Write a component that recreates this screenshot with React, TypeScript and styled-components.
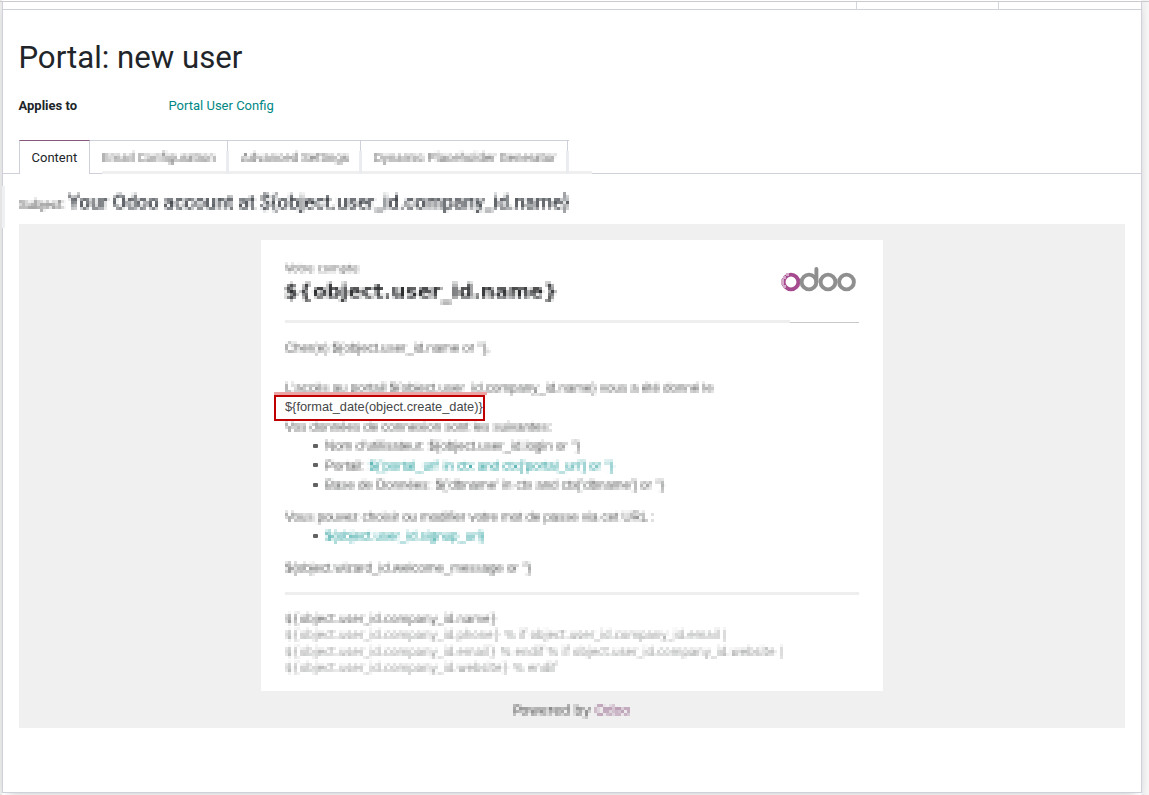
import React from "react";
import styled, { createGlobalStyle } from "styled-components";

const sans = `Roboto, "Liberation Sans", sans-serif`;
const arial = `"Liberation Sans", Arial, sans-serif`;
const verdana = `"DejaVu Sans", Verdana, sans-serif`;

const GlobalStyle = createGlobalStyle`
  * { box-sizing: border-box; }
  body { margin: 0; background: #fff; font-family: ${sans}; color: #212529; overflow: hidden; }
`;

const Page = styled.div`
  height: 795px;
  padding: 1px 7px 2px 2px;
  overflow: hidden;
  background: linear-gradient(90deg, #ebebec 0 2px, #fff 2px 1141px, #ededef 1142px, #f7f7f7 1149px);
`;

const Sheet = styled.main`
  position: relative;
  height: 792px;
  display: flex;
  flex-direction: column;
  background: #fff;
  border: 1px solid #cfd1da;
  border-top: 0;
  box-shadow: 0 4px 10px -7px #888;
`;

const StatusBar = styled.div`
  display: flex;
  justify-content: flex-end;
  height: 9px;
  flex: none;
  margin: 0 -8px 0 -3px;
  padding-right: 8px;
  border-top: 1px solid #c9cbce;
  background: linear-gradient(#cfd1da, #cfd1da) 3px 100% / 1138px 1px no-repeat;
`;

const StatusCell = styled.div<{ $w: number }>`
  width: ${(p) => p.$w}px;
  border-left: 1px solid #d3d6dc;
`;

const Title = styled.h1`
  margin: 27px 0 0 15.4px;
  height: 42px;
  font-size: 31.2px;
  line-height: 42px;
  font-weight: 400;
`;

const Field = styled.div`
  display: flex;
  margin: 17px 0 0 15.5px;
  height: 20px;
  font-size: 13px;
  line-height: 20px;
`;

const Label = styled.label`
  width: 150px;
  font-weight: 700;
`;

const Link = styled.a`
  color: #008784;
`;

const Pixelated = styled.span<{ $ls?: number }>`
  display: inline-block;
  white-space: nowrap;
  letter-spacing: ${(p) => p.$ls ?? 0}px;
  filter: url(#mosaic);
`;

const Tabs = styled.nav`
  display: flex;
  margin-top: 24px;
  height: 34px;
  flex: none;
  padding-left: 16px;
  background:
    linear-gradient(#efeff0, #efeff0) 99px 31px / 490px 3px no-repeat,
    linear-gradient(90deg, #cfd1da 99px, transparent 99px 589px, #cfd1da 589px) 0 33px / 100% 1px no-repeat;
`;

const Tab = styled.div<{ $w: number; $active?: boolean }>`
  width: ${(p) => p.$w}px;
  padding-left: ${(p) => (p.$active ? 11.5 : 12)}px;
  font-size: 13px;
  line-height: 33px;
  white-space: nowrap;
  border-top: 1px solid ${(p) => (p.$active ? "#875a7b" : "#cfd1da")};
  color: ${(p) => (p.$active ? "#212529" : "#666")};
  ${(p) =>
    p.$active
      ? `background: #fff; border-left: 1px solid #cfd1da; border-right: 1px solid #cfd1da;`
      : `background:
          linear-gradient(#cfd1da, #cfd1da) calc(100% - 1px) 0 / 1px 10px no-repeat,
          linear-gradient(#ebecef, #ebecef) 100% 10px / 3px 23px no-repeat;`}
`;

const Subject = styled.div`
  display: flex;
  height: 50px;
  flex: none;
  padding-left: 16px;
  align-items: baseline;
  line-height: 57px;
`;

const SubjectLabel = styled.span`
  width: 49px;
  font-size: 13px;
  color: #4c4c4c;
`;

const SubjectText = styled.span`
  font-size: 19.4px;
  font-weight: 500;
  color: #33383e;
`;

const EdgeFade = styled.i`
  position: absolute;
  left: -1px;
  top: 185px;
  width: 3px;
  height: 42px;
  background: #eff0f2;
`;

const MailArea = styled.section`
  margin: 0 16px;
  height: 504px;
  flex: none;
  padding-top: 16px;
  background: #f0f0f0;
`;

const Card = styled.article`
  width: 622px;
  height: 451px;
  margin: 0 auto 0 242px;
  padding: 22px 24px 0;
  background: #fff;
`;

const CardHeader = styled.header`
  display: flex;
  justify-content: space-between;
  height: 58px;
`;

const Small = styled.div`
  height: 13px;
  font: 11px/13px ${verdana};
  color: #505050;
`;

const Name = styled.div`
  height: 32px;
  margin-left: -0.8px;
  font: bold 20.25px/33px ${verdana};
  color: #2c2e30;
`;

const Logo = styled.svg`
  width: 77px;
  height: 28px;
  margin: 3px 2px 0 0;
`;

const Rule = styled.div<{ $sharp?: boolean }>`
  height: 3px;
  background: ${(p) =>
    p.$sharp
      ? "linear-gradient(#eee,#eee) 0 0 / 505px 3px no-repeat, linear-gradient(#c8c8c8,#c8c8c8) 505px 2px / 69px 1px no-repeat"
      : "#eee"};
`;

const Body = styled.div`
  position: relative;
  padding-top: 15px;
  height: 269px;
  font: 13px/19.5px ${arial};
  color: #505152;
`;

const Line = styled.div<{ $gap?: number }>`
  height: 19.5px;
  margin-top: ${(p) => p.$gap ?? 0}px;
`;

const Teal = styled.span`
  color: #0f9492;
`;

const Item = styled(Line)`
  display: flex;
  padding-left: 28px;
  align-items: center;
  &::before {
    content: "";
    width: 5px;
    height: 4px;
    margin-right: 7px;
    background: #626262;
    border-radius: 1px;
  }
`;

const Highlight = styled.div`
  position: absolute;
  left: -11px;
  top: 72px;
  width: 211px;
  height: 26px;
  padding-left: 9px;
  border: 2px solid #c00000;
  background: #fff;
  color: #454748;
  font: 12.8px/20px ${arial};
  white-space: nowrap;
  &::before {
    content: "";
    position: absolute;
    left: -2px;
    right: -4px;
    top: -5px;
    height: 3px;
    background: #eba5a5;
  }
`;

const Footer = styled.footer`
  padding-top: 16px;
  font: 11.55px/16.4px ${verdana};
  color: #949695;
`;

const FooterLine = styled.div<{ $dark?: boolean }>`
  height: 16.4px;
  color: ${(p) => (p.$dark ? "#5c5c5c" : "inherit")};
`;

const Powered = styled.div`
  margin-left: 494px;
  padding-top: 10px;
  font: 13.4px/20px ${verdana};
  color: #505050;
`;

const Purple = styled.span`
  color: #8c5580;
`;

const tabs = [
  { text: "Email Configuration", w: 139 },
  { text: "Advanced Settings", w: 133 },
  { text: "Dynamic Placeholder Generator", w: 207 },
];

const FilterDefs = styled.svg`
  position: absolute;
`;

/* Averages each 3x3 cell, keeps its centre point and spreads that over the cell. */
function MosaicFilter() {
  return (
    <FilterDefs width="0" height="0" aria-hidden="true">
      <filter id="mosaic" x="0" y="0" width="100%" height="100%" colorInterpolationFilters="sRGB">
        <feConvolveMatrix
          in="SourceGraphic"
          order="3"
          kernelMatrix="1 1 1 1 1 1 1 1 1"
          divisor="9"
          edgeMode="none"
          preserveAlpha="false"
          result="soft"
        />
        <feFlood x="1" y="1" width="1" height="1" floodColor="#000" result="point" />
        <feOffset in="point" dx="0" dy="0" x="0" y="0" width="3" height="3" result="cell" />
        <feTile in="cell" result="grid" />
        <feComposite in="soft" in2="grid" operator="in" />
        <feMorphology operator="dilate" radius="1" />
      </filter>
    </FilterDefs>
  );
}

function OdooLogo() {
  return (
    <Logo viewBox="0 0 77 28" fill="none" strokeWidth="3.9" stroke="#8f8f8f">
      <circle cx="11" cy="17" r="7.4" stroke="#a64a8f" />
      <path d="M3 11h3v3H3zM1 14h3v6H1zM3 20h3v3H3zM6 8h3v3H6z" fill="#d3a8c9" stroke="none" />
      <circle cx="29" cy="17" r="7.4" />
      <path d="M36.4 17V4" strokeLinecap="round" />
      <circle cx="48" cy="17" r="7.4" />
      <circle cx="66.5" cy="17" r="7.4" />
    </Logo>
  );
}

export default function App() {
  return (
    <Page>
      <GlobalStyle />
      <MosaicFilter />
      <Sheet>
        <StatusBar>
          <StatusCell $w={142} />
          <StatusCell $w={143} />
        </StatusBar>
        <Title>Portal: new user</Title>
        <Field>
          <Label>Applies to</Label>
          <Link>Portal User Config</Link>
        </Field>
        <Tabs>
          <Tab $w={71} $active>Content</Tab>
          {tabs.map((t) => (
            <Tab key={t.text} $w={t.w}>
              <Pixelated>{t.text}</Pixelated>
            </Tab>
          ))}
        </Tabs>
        <Subject>
          <SubjectLabel><Pixelated>Subject:</Pixelated></SubjectLabel>
          <SubjectText><Pixelated>{"Your Odoo account at ${object.user_id.company_id.name}"}</Pixelated></SubjectText>
        </Subject>
        <EdgeFade />
        <MailArea>
          <Card>
            <CardHeader>
              <div>
                <Small><Pixelated>Votre compte</Pixelated></Small>
                <Name><Pixelated>{"${object.user_id.name}"}</Pixelated></Name>
              </div>
              <OdooLogo />
            </CardHeader>
            <Rule $sharp />
            <Body>
              <Line><Pixelated $ls={-0.07}>{"Cher(e) ${object.user_id.name or ''},"}</Pixelated></Line>
              <Line $gap={20}><Pixelated>{"L'accès au portail ${object.user_id.company_id.name} vous a été donné le"}</Pixelated></Line>
              <Line $gap={19.5}><Pixelated>Vos données de connexion sont les suivantes:</Pixelated></Line>
              <Item><Pixelated>{"Nom d'utilisateur: ${object.user_id.login or ''}"}</Pixelated></Item>
              <Item><Pixelated>Portail: <Teal>{"${'portal_url' in ctx and ctx['portal_url'] or ''}"}</Teal></Pixelated></Item>
              <Item><Pixelated $ls={-0.02}>{"Base de Données: ${'dbname' in ctx and ctx['dbname'] or ''}"}</Pixelated></Item>
              <Line $gap={12.5}><Pixelated $ls={-0.09}>Vous pouvez choisir ou modifier votre mot de passe via cet URL :</Pixelated></Line>
              <Item $gap={-0.5}><Pixelated $ls={-0.05}><Teal>{"${object.user_id.signup_url}"}</Teal></Pixelated></Item>
              <Line $gap={12.5}><Pixelated $ls={-0.04}>{"${object.wizard_id.welcome_message or ''}"}</Pixelated></Line>
              <Highlight>{"${format_date(object.create_date)}"}</Highlight>
            </Body>
            <Rule />
            <Footer>
              <FooterLine $dark><Pixelated>{"${object.user_id.company_id.name}"}</Pixelated></FooterLine>
              <FooterLine><Pixelated>{"${object.user_id.company_id.phone} % if object.user_id.company_id.email |"}</Pixelated></FooterLine>
              <FooterLine><Pixelated>{"${object.user_id.company_id.email} % endif % if object.user_id.company_id.website |"}</Pixelated></FooterLine>
              <FooterLine><Pixelated>{"${object.user_id.company_id.website} % endif"}</Pixelated></FooterLine>
            </Footer>
          </Card>
          <Powered><Pixelated>Powered by <Purple>Odoo</Purple></Pixelated></Powered>
        </MailArea>
      </Sheet>
    </Page>
  );
}
